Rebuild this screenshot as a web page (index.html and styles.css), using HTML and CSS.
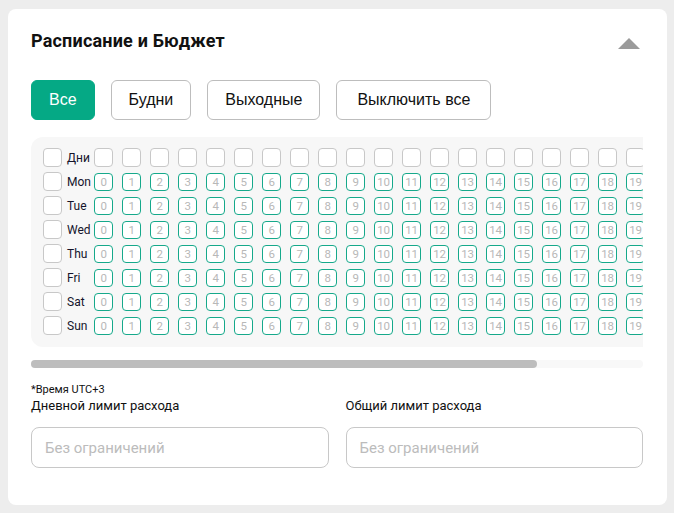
FILE: index.html
```html
<!DOCTYPE html>
<html lang="ru">
<head>
<meta charset="utf-8">
<title>Расписание и Бюджет</title>
<link rel="stylesheet" href="styles.css">
</head>
<body>
<section class="card">
  <header class="card-head">
    <h2 class="title">Расписание и Бюджет</h2>
    <span class="toggle" aria-label="Свернуть"></span>
  </header>

  <div class="presets">
    <button class="btn btn-active">Все</button>
    <button class="btn">Будни</button>
    <button class="btn">Выходные</button>
    <button class="btn btn-wide">Выключить все</button>
  </div>

  <div class="sched-scroll">
    <div class="sched">
      <div class="row">
        <span class="cb"></span><span class="day">Дни</span>
        <span class="hcb"></span><span class="hcb"></span><span class="hcb"></span><span class="hcb"></span><span class="hcb"></span><span class="hcb"></span><span class="hcb"></span><span class="hcb"></span><span class="hcb"></span><span class="hcb"></span><span class="hcb"></span><span class="hcb"></span><span class="hcb"></span><span class="hcb"></span><span class="hcb"></span><span class="hcb"></span><span class="hcb"></span><span class="hcb"></span><span class="hcb"></span><span class="hcb"></span><span class="hcb"></span><span class="hcb"></span><span class="hcb"></span><span class="hcb"></span>
      </div>
      <div class="row">
        <span class="cb"></span><span class="day">Mon</span>
        <span class="cell">0</span><span class="cell">1</span><span class="cell">2</span><span class="cell">3</span><span class="cell">4</span><span class="cell">5</span><span class="cell">6</span><span class="cell">7</span><span class="cell">8</span><span class="cell">9</span><span class="cell">10</span><span class="cell">11</span><span class="cell">12</span><span class="cell">13</span><span class="cell">14</span><span class="cell">15</span><span class="cell">16</span><span class="cell">17</span><span class="cell">18</span><span class="cell">19</span><span class="cell">20</span><span class="cell">21</span><span class="cell">22</span><span class="cell">23</span>
      </div>
      <div class="row">
        <span class="cb"></span><span class="day">Tue</span>
        <span class="cell">0</span><span class="cell">1</span><span class="cell">2</span><span class="cell">3</span><span class="cell">4</span><span class="cell">5</span><span class="cell">6</span><span class="cell">7</span><span class="cell">8</span><span class="cell">9</span><span class="cell">10</span><span class="cell">11</span><span class="cell">12</span><span class="cell">13</span><span class="cell">14</span><span class="cell">15</span><span class="cell">16</span><span class="cell">17</span><span class="cell">18</span><span class="cell">19</span><span class="cell">20</span><span class="cell">21</span><span class="cell">22</span><span class="cell">23</span>
      </div>
      <div class="row">
        <span class="cb"></span><span class="day">Wed</span>
        <span class="cell">0</span><span class="cell">1</span><span class="cell">2</span><span class="cell">3</span><span class="cell">4</span><span class="cell">5</span><span class="cell">6</span><span class="cell">7</span><span class="cell">8</span><span class="cell">9</span><span class="cell">10</span><span class="cell">11</span><span class="cell">12</span><span class="cell">13</span><span class="cell">14</span><span class="cell">15</span><span class="cell">16</span><span class="cell">17</span><span class="cell">18</span><span class="cell">19</span><span class="cell">20</span><span class="cell">21</span><span class="cell">22</span><span class="cell">23</span>
      </div>
      <div class="row">
        <span class="cb"></span><span class="day">Thu</span>
        <span class="cell">0</span><span class="cell">1</span><span class="cell">2</span><span class="cell">3</span><span class="cell">4</span><span class="cell">5</span><span class="cell">6</span><span class="cell">7</span><span class="cell">8</span><span class="cell">9</span><span class="cell">10</span><span class="cell">11</span><span class="cell">12</span><span class="cell">13</span><span class="cell">14</span><span class="cell">15</span><span class="cell">16</span><span class="cell">17</span><span class="cell">18</span><span class="cell">19</span><span class="cell">20</span><span class="cell">21</span><span class="cell">22</span><span class="cell">23</span>
      </div>
      <div class="row">
        <span class="cb"></span><span class="day">Fri</span>
        <span class="cell">0</span><span class="cell">1</span><span class="cell">2</span><span class="cell">3</span><span class="cell">4</span><span class="cell">5</span><span class="cell">6</span><span class="cell">7</span><span class="cell">8</span><span class="cell">9</span><span class="cell">10</span><span class="cell">11</span><span class="cell">12</span><span class="cell">13</span><span class="cell">14</span><span class="cell">15</span><span class="cell">16</span><span class="cell">17</span><span class="cell">18</span><span class="cell">19</span><span class="cell">20</span><span class="cell">21</span><span class="cell">22</span><span class="cell">23</span>
      </div>
      <div class="row">
        <span class="cb"></span><span class="day">Sat</span>
        <span class="cell">0</span><span class="cell">1</span><span class="cell">2</span><span class="cell">3</span><span class="cell">4</span><span class="cell">5</span><span class="cell">6</span><span class="cell">7</span><span class="cell">8</span><span class="cell">9</span><span class="cell">10</span><span class="cell">11</span><span class="cell">12</span><span class="cell">13</span><span class="cell">14</span><span class="cell">15</span><span class="cell">16</span><span class="cell">17</span><span class="cell">18</span><span class="cell">19</span><span class="cell">20</span><span class="cell">21</span><span class="cell">22</span><span class="cell">23</span>
      </div>
      <div class="row">
        <span class="cb"></span><span class="day">Sun</span>
        <span class="cell">0</span><span class="cell">1</span><span class="cell">2</span><span class="cell">3</span><span class="cell">4</span><span class="cell">5</span><span class="cell">6</span><span class="cell">7</span><span class="cell">8</span><span class="cell">9</span><span class="cell">10</span><span class="cell">11</span><span class="cell">12</span><span class="cell">13</span><span class="cell">14</span><span class="cell">15</span><span class="cell">16</span><span class="cell">17</span><span class="cell">18</span><span class="cell">19</span><span class="cell">20</span><span class="cell">21</span><span class="cell">22</span><span class="cell">23</span>
      </div>
    </div>
  </div>
  <div class="scrollbar"><div class="scroll-thumb"></div></div>

  <p class="note">*Время UTC+3</p>
  <div class="limits">
    <label class="field">
      <span class="field-label">Дневной лимит расхода</span>
      <input class="input" type="text" placeholder="Без ограничений">
    </label>
    <label class="field">
      <span class="field-label">Общий лимит расхода</span>
      <input class="input" type="text" placeholder="Без ограничений">
    </label>
  </div>
</section>
</body>
</html>
```

FILE: styles.css
```css
html, body {
  margin: 0;
  padding: 0;
}
body {
  background: #ededed;
  padding: 9px 7px 8px 8px;
  font-family: Roboto, "Liberation Sans", Arial, sans-serif;
  color: #111;
}
.card {
  background: #fff;
  border-radius: 8px;
  width: 659px;
  height: 496px;
  box-sizing: border-box;
  padding: 17px 24px 0 23px;
}
.card-head {
  display: flex;
  justify-content: space-between;
  align-items: center;
  height: 28px;
}
.title {
  margin: 0;
  font-size: 18px;
  font-weight: 700;
  letter-spacing: 0.2px;
  color: #111;
}
.toggle {
  width: 0;
  height: 0;
  border-left: 11px solid transparent;
  border-right: 11px solid transparent;
  border-bottom: 11px solid #9b9b9b;
  margin-top: 6px;
  margin-right: 3px;
}
.presets {
  display: flex;
  gap: 16px;
  margin-top: 26px;
}
.btn {
  height: 40px;
  padding: 0 17px;
  border: 1px solid #bdbdbd;
  background: #fff;
  border-radius: 6px;
  font-family: "Liberation Sans", Arial, sans-serif;
  font-size: 16px;
  color: #111;
}
.btn-wide {
  padding: 0 20px;
}
.btn-active {
  background: #05a985;
  border-color: #05a985;
  color: #fff;
}
.sched-scroll {
  margin-top: 17px;
  overflow: hidden;
}
.sched {
  width: max-content;
  background: #f7f7f7;
  border-radius: 12px;
  padding: 11px 12px 12px 12px;
  display: flex;
  flex-direction: column;
  gap: 5px;
}
.scrollbar {
  margin-top: 13px;
  height: 8px;
  background: #f8f8f8;
  border-radius: 4px;
}
.scroll-thumb {
  width: 506px;
  height: 8px;
  background: #bdbdbd;
  border-radius: 4px;
}
.row {
  display: flex;
  align-items: center;
  gap: 9px;
  height: 19px;
}
.cb, .hcb {
  width: 19px;
  height: 19px;
  box-sizing: border-box;
  border: 1px solid #c8c8c8;
  border-radius: 4px;
  background: #fff;
  flex: none;
}
.day {
  width: 27px;
  margin-left: -4px;
  margin-right: -9px;
  font-size: 12px;
  font-weight: 400;
  color: #14142b;
  flex: none;
}
.cell {
  width: 19px;
  height: 18px;
  box-sizing: border-box;
  border: 1.5px solid #16a98b;
  border-radius: 4px;
  background: #fff;
  flex: none;
  display: flex;
  align-items: center;
  justify-content: center;
  font-size: 11.5px;
  color: #b8b8b8;
  letter-spacing: -0.3px;
}
.note {
  margin: 15px 0 0 0;
  font-size: 11px;
  line-height: 14px;
  color: #111;
}
.limits {
  display: grid;
  grid-template-columns: 1fr 1fr;
  gap: 17px;
}
.field {
  display: flex;
  flex-direction: column;
}
.field-label {
  font-size: 13px;
  line-height: 18px;
  color: #111;
  margin-bottom: 12px;
}
.input {
  height: 41px;
  box-sizing: border-box;
  border: 1px solid #c8c8c8;
  border-radius: 8px;
  padding: 0 13px;
  font-family: Roboto, "Liberation Sans", Arial, sans-serif;
  font-size: 15px;
  color: #111;
  background: #fff;
  outline: none;
}
.input::placeholder {
  color: #bcbcbc;
}
```
